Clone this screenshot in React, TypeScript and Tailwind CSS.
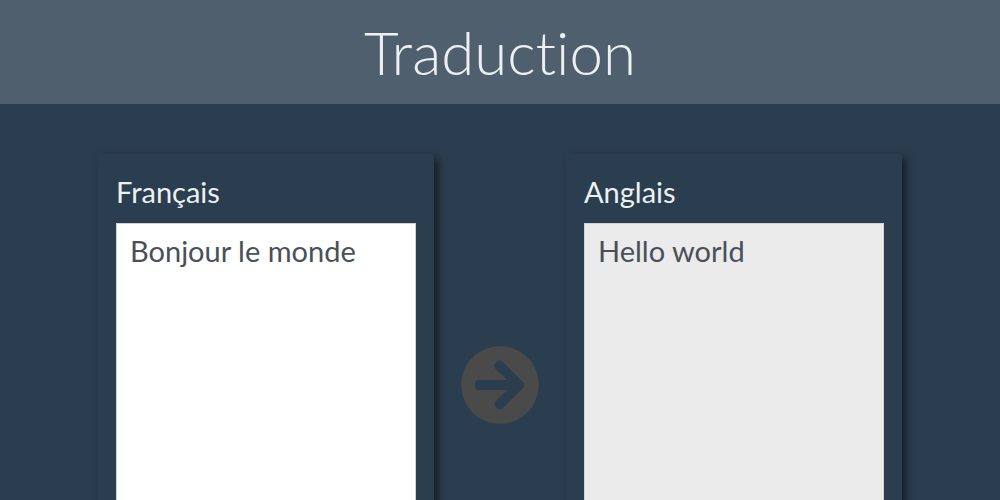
import { useState } from "react";
import { FaArrowCircleRight } from "react-icons/fa";

const panel =
  "min-w-0 flex-1 rounded px-[18px] pt-5 pb-[18px] shadow-[4px_4px_8px_rgba(0,0,0,0.55)]";
const label = "block text-[29px] leading-9 text-[#ecf0f1]";
const area =
  "mt-[13px] block h-[375px] w-full resize-none border border-[#ced4da] px-[13px] py-[9px] text-[29px] leading-9 text-[#495057] outline-none";

export default function App() {
  const [source, setSource] = useState("Bonjour le monde");
  const [target, setTarget] = useState("Hello world");

  return (
    <div className="h-screen overflow-hidden bg-[#2b3e4f] font-['Lato',sans-serif] [font-variant-ligatures:none]">
      <header className="bg-[#4f5f6d] py-4 text-center">
        <h1 className="text-[60px] leading-[72px] font-light text-[#ecf0f1]">Traduction</h1>
      </header>
      <main className="flex items-start px-[98px] pt-[50px]">
        <section className={panel}>
          <label htmlFor="source" className={label}>Français</label>
          <textarea
            id="source"
            spellCheck={false}
            className={`${area} bg-white`}
            value={source}
            onChange={(e) => setSource(e.target.value)}
          />
        </section>
        <button
          type="button"
          aria-label="Traduire"
          className="mx-[26px] self-center text-[#4a4a4a]"
          onClick={() => setTarget(source === "Bonjour le monde" ? "Hello world" : "")}
        >
          <FaArrowCircleRight className="size-20" />
        </button>
        <section className={panel}>
          <label htmlFor="target" className={label}>Anglais</label>
          <textarea id="target" readOnly className={`${area} bg-[#ebebeb]`} value={target} />
        </section>
      </main>
    </div>
  );
}
